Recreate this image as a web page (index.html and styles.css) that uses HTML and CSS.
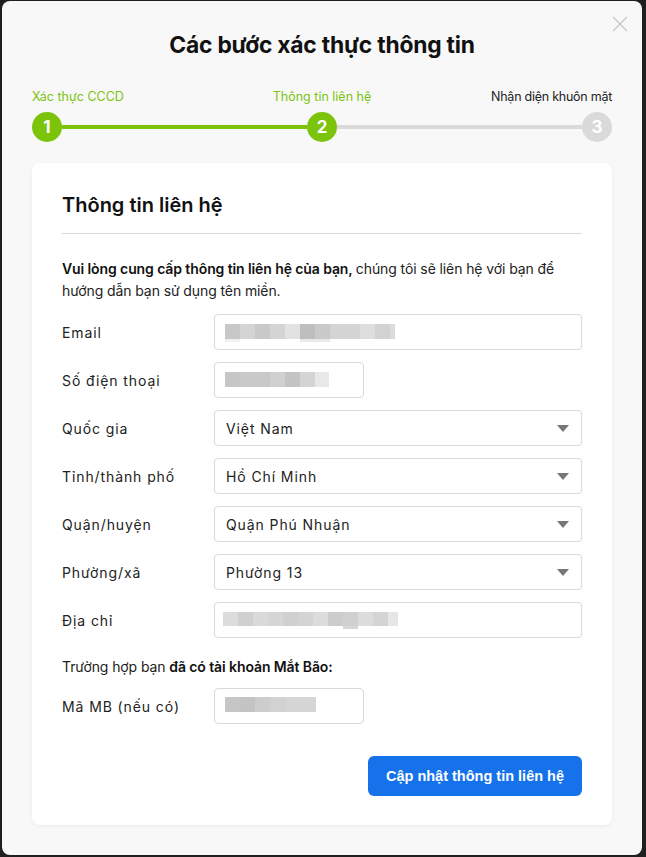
FILE: index.html
```html
<!DOCTYPE html>
<html lang="vi">
<head>
<meta charset="utf-8">
<title>Các bước xác thực thông tin</title>
<link rel="stylesheet" href="styles.css">
</head>
<body>
<div class="modal">
  <button class="close" aria-label="Đóng">
    <svg width="16" height="16" viewBox="0 0 16 16"><path d="M1 1L15 15M15 1L1 15" stroke="#c4c4c4" stroke-width="1.2" fill="none"/></svg>
  </button>
  <h1 class="title">Các bước xác thực thông tin</h1>

  <div class="steps">
    <div class="step-labels">
      <span class="lbl lbl-left done">Xác thực CCCD</span>
      <span class="lbl lbl-mid done">Thông tin liên hệ</span>
      <span class="lbl lbl-right">Nhận diện khuôn mặt</span>
    </div>
    <div class="track">
      <span class="dot active">1</span>
      <span class="bar active"></span>
      <span class="dot active">2</span>
      <span class="bar"></span>
      <span class="dot">3</span>
    </div>
  </div>

  <div class="card">
    <h2 class="card-title">Thông tin liên hệ</h2>
    <p class="intro"><b>Vui lòng cung cấp thông tin liên hệ của bạn, </b>chúng tôi sẽ liên hệ với bạn để hướng dẫn bạn sử dụng tên miền.</p>

    <div class="form">
      <div class="row">
        <label class="label">Email</label>
        <div class="field"><span class="mosaic mz-email"></span></div>
      </div>
      <div class="row">
        <label class="label">Số điện thoại</label>
        <div class="field short"><span class="mosaic mz-phone"></span></div>
      </div>
      <div class="row">
        <label class="label">Quốc gia</label>
        <div class="field select"><span class="value">Việt Nam</span><span class="caret"></span></div>
      </div>
      <div class="row">
        <label class="label">Tỉnh/thành phố</label>
        <div class="field select"><span class="value">Hồ Chí Minh</span><span class="caret"></span></div>
      </div>
      <div class="row">
        <label class="label">Quận/huyện</label>
        <div class="field select"><span class="value">Quận Phú Nhuận</span><span class="caret"></span></div>
      </div>
      <div class="row">
        <label class="label">Phường/xã</label>
        <div class="field select"><span class="value">Phường 13</span><span class="caret"></span></div>
      </div>
      <div class="row">
        <label class="label">Địa chỉ</label>
        <div class="field"><span class="mosaic mz-addr"></span></div>
      </div>
    </div>

    <p class="note">Trường hợp bạn <b>đã có tài khoản Mắt Bão:</b></p>

    <div class="row">
      <label class="label">Mã MB (nếu có)</label>
      <div class="field short"><span class="mosaic mz-mb"></span></div>
    </div>

    <div class="actions">
      <button class="btn">Cập nhật thông tin liên hệ</button>
    </div>
  </div>
</div>
</body>
</html>
```

FILE: styles.css
```css
* { box-sizing: border-box; }
html, body { margin: 0; padding: 0; }
body {
  background: #1f1f1f;
  font-family: Inter, "Noto Sans", sans-serif;
  color: #1a1a1a;
  width: 646px;
  height: 857px;
  overflow: hidden;
}
.modal {
  position: relative;
  margin: 1px 4px 0 2px;
  height: 854px;
  background: #f8f8f8;
  border-radius: 8px;
  padding: 29px 30px 0 30px;
}
.close {
  position: absolute;
  top: 15px;
  right: 14px;
  width: 16px;
  height: 16px;
  padding: 0;
  border: 0;
  background: transparent;
  display: block;
}
.close svg { display: block; }
.title {
  margin: 0;
  text-align: center;
  font-size: 22.8px;
  line-height: 30px;
  font-weight: 700;
  color: #111;
  letter-spacing: -0.2px;
}
.steps { margin-top: 29px; }
.step-labels {
  display: grid;
  grid-template-columns: 1fr auto 1fr;
  font-size: 12.5px;
  line-height: 16px;
  color: #222;
}
.lbl-left { text-align: left; }
.lbl-mid { text-align: center; }
.lbl-right { text-align: right; letter-spacing: -0.25px; }
.lbl.done { color: #7cc313; }
.track {
  margin-top: 7px;
  display: flex;
  align-items: center;
}
.dot {
  width: 30px;
  height: 30px;
  border-radius: 50%;
  background: #dadada;
  color: #fff;
  font-weight: 700;
  font-size: 17px;
  display: flex;
  align-items: center;
  justify-content: center;
  flex: none;
}
.dot.active { background: #7cc30c; }
.bar {
  flex: 1;
  height: 4px;
  background: #dadada;
}
.bar.active { background: #7cc30c; }

.card {
  margin-top: 21px;
  background: #fff;
  border-radius: 8px;
  box-shadow: 0 1px 4px rgba(0,0,0,0.06);
  padding: 28px 30px 29px 30px;
}
.card-title {
  margin: 0;
  font-size: 20px;
  line-height: 28px;
  font-weight: 600;
  color: #111;
  padding-bottom: 14px;
  border-bottom: 1px solid #d9d9d9;
}
.intro {
  margin: 24px 0 12px 0;
  font-size: 14px;
  line-height: 22px;
  color: #222;
  letter-spacing: -0.1px;
}
.intro b, .note b { font-weight: 600; color: #111; }
.form {
  display: flex;
  flex-direction: column;
  gap: 12px;
}
.row {
  display: flex;
  align-items: center;
}
.label {
  width: 152px;
  flex: none;
  font-size: 14px;
  letter-spacing: 0.9px;
  color: #222;
}
.field {
  flex: 1;
  height: 36px;
  border: 1px solid #d9d9d9;
  border-radius: 4px;
  background: #fff;
  display: flex;
  align-items: center;
  padding: 0 12px 0 10px;
}
.field.short { flex: none; width: 150px; }
.select { justify-content: space-between; padding-left: 11px; }
.value {
  font-size: 14px;
  letter-spacing: 0.9px;
  color: #222;
}
.caret {
  width: 0;
  height: 0;
  border-left: 6.5px solid transparent;
  border-right: 6.5px solid transparent;
  border-top: 7px solid #777;
}
.mosaic { display: block; height: 15px; }
.mz-email {
  width: 170px;
  height: 18px;
  margin-top: 2px;
  background:
    linear-gradient(to right, #f1f1f1 0 15px, transparent 15px 75px, #e9e9e9 75px 105px, transparent 105px) left bottom / 100% 3px no-repeat,
    linear-gradient(to right,
      #c8c8c8 0 15px, #d4d4d4 15px 30px, #c9c9c9 30px 45px, #d4d4d4 45px 60px,
      #e2e2e2 60px 75px, #bebebe 75px 90px, #c9c9c9 90px 105px, #d4d4d4 105px 120px,
      #d4d4d4 120px 135px, #dedede 135px 150px, #d2d2d2 150px 165px, #dcdcdc 165px 170px) left top / 100% 15px no-repeat;
}
.mz-phone {
  width: 104px;
  margin-top: -2px;
  background: linear-gradient(to right,
    #c6c6c6 0 15px, #c9c9c9 15px 45px, #d0d0d0 45px 60px, #c4c4c4 60px 75px,
    #d4d4d4 75px 90px, #e8e8e8 90px 104px);
}
.mz-addr {
  width: 175px;
  height: 17px;
  margin-left: -2px;
  margin-top: 1px;
  background:
    linear-gradient(to right, transparent 0 120px, #d6d6d6 120px 135px, transparent 135px) left bottom / 100% 3px no-repeat,
    linear-gradient(to right,
      #dcdcdc 0 15px, #d0d0d0 15px 30px, #dadada 30px 45px, #d6d6d6 45px 60px,
      #d0d0d0 60px 75px, #d4d4d4 75px 90px, #dcdcdc 90px 105px, #cccccc 105px 120px,
      #d0d0d0 120px 135px, #dcdcdc 135px 150px, #d4d4d4 150px 165px, #e6e6e6 165px 175px) left top / 100% 14px no-repeat;
}
.mz-mb {
  width: 91px;
  margin-top: -3px;
  background: linear-gradient(to right,
    #c6c6c6 0 15px, #c4c4c4 15px 30px, #cdcdcd 30px 45px, #d2d2d2 45px 62px, #d6d6d6 62px 91px);
}
.note {
  margin: 18px 0 10px 0;
  font-size: 14px;
  line-height: 22px;
  color: #222;
  letter-spacing: -0.1px;
}
.actions {
  display: flex;
  justify-content: flex-end;
  margin-top: 32px;
}
.btn {
  width: 214px;
  height: 40px;
  border: 0;
  border-radius: 6px;
  background: #1572ea;
  color: #fff;
  font-family: "Liberation Sans", Arial, sans-serif;
  font-weight: 700;
  font-size: 14.5px;
}
```
